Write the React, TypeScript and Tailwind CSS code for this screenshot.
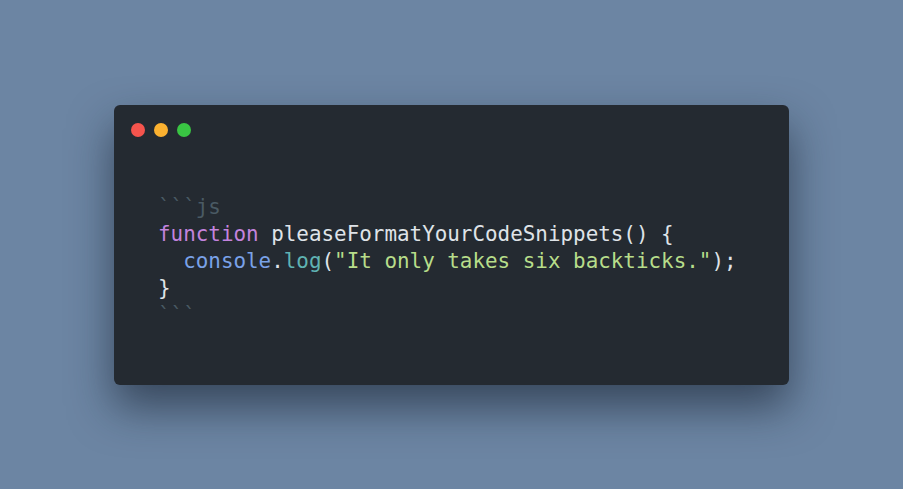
const Dot = ({ color }: { color: string }) => (
  <span className={`block w-[14px] h-[14px] rounded-full ${color}`}></span>
);

export default function App() {
  return (
    <div className="w-full h-[489px] flex items-center justify-center bg-[#6c85a3]">
      <div className="w-[675px] h-[280px] rounded-md bg-[#242a31] shadow-[0_22px_44px_rgba(20,30,45,0.6)] pt-[18px] pl-[17px]">
        <div className="flex gap-[9px]">
          <Dot color="bg-[#f5544d]" />
          <Dot color="bg-[#fbb130]" />
          <Dot color="bg-[#39c543]" />
        </div>
        <pre
          className="mt-[57px] ml-[27px] text-[20.9px] leading-[27px] text-[#dfe3e8]"
          style={{ fontFamily: '"DejaVu Sans Mono", monospace' }}
        >
          <span className="text-[#4a5a64]">```js</span>
          {'\n'}
          <span className="text-[#c383dd]">function</span> pleaseFormatYourCodeSnippets() {'{'}
          {'\n  '}
          <span className="text-[#7aa2e8]">console</span>.<span className="text-[#5fb3b3]">log</span>(
          <span className="text-[#b7dd8a]">"It only takes six backticks."</span>);
          {'\n'}
          {'}'}
          {'\n'}
          <span className="text-[#4a5a64]">```</span>
        </pre>
      </div>
    </div>
  );
}
